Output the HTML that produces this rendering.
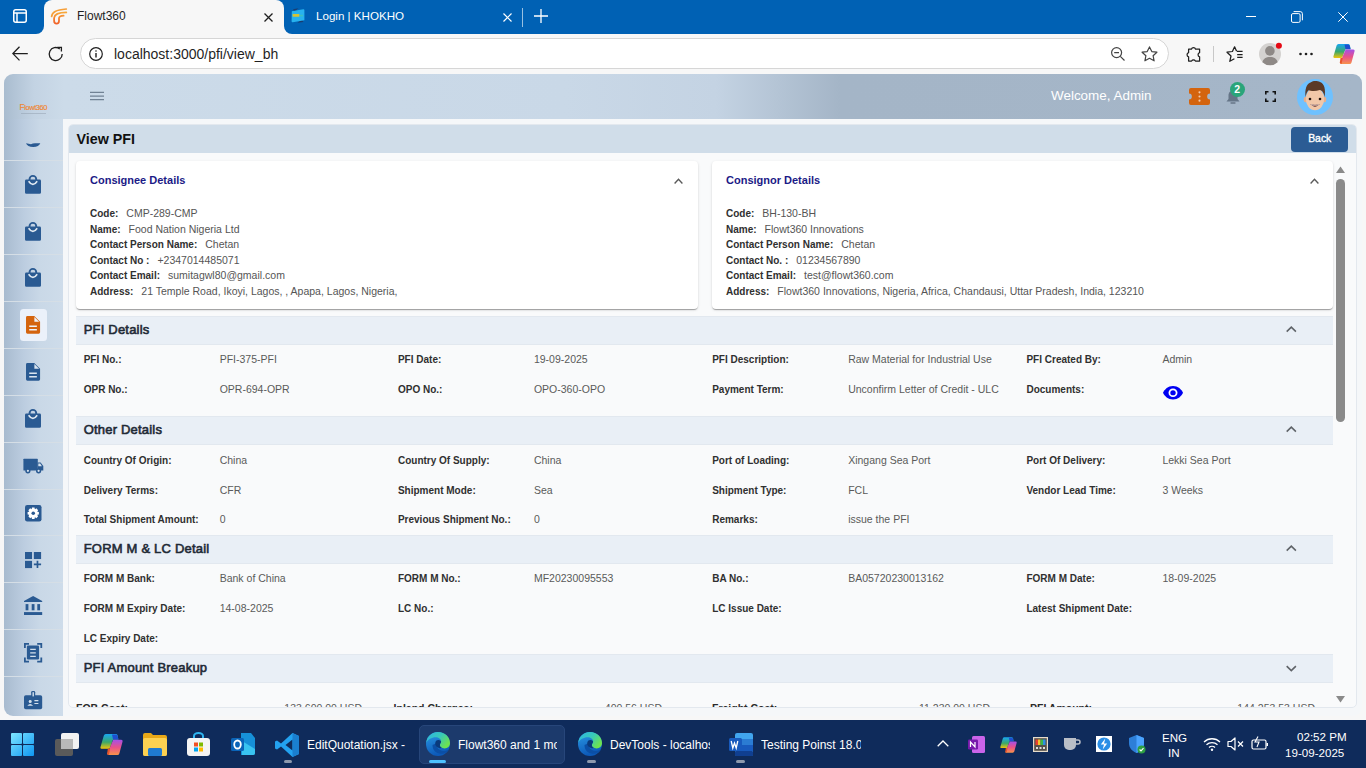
<!DOCTYPE html><html><head><meta charset="utf-8"><style>
*{margin:0;padding:0;box-sizing:border-box}
html,body{width:1366px;height:768px;overflow:hidden;background:#f7f7f7;font-family:"Liberation Sans",sans-serif}
.t{position:absolute;white-space:nowrap}
.abs{position:absolute}
svg{position:absolute;overflow:visible}
</style></head><body><div class="abs" style="left:0;top:0;width:1366px;height:34px;background:#0061b4"></div>
<div class="abs" style="left:36px;top:26px;width:8px;height:8px;background:#f7f7f7"></div>
<div class="abs" style="left:28px;top:18px;width:16px;height:16px;background:#0061b4;border-radius:0 0 8px 0"></div>
<div class="abs" style="left:284px;top:26px;width:8px;height:8px;background:#f7f7f7"></div>
<div class="abs" style="left:284px;top:18px;width:16px;height:16px;background:#0061b4;border-radius:0 0 0 8px"></div>
<div class="abs" style="left:44px;top:0;width:240px;height:34px;background:#f7f7f7;border-radius:8px 8px 0 0"></div>
<svg style="left:13px;top:9px" width="14" height="14" viewBox="0 0 14 14"><rect x="0.75" y="0.75" width="12.5" height="12.5" rx="2" fill="none" stroke="#fff" stroke-width="1.5"/><line x1="0.75" y1="4" x2="13" y2="4" stroke="#fff" stroke-width="1.5"/><line x1="4" y1="4" x2="4" y2="13" stroke="#fff" stroke-width="1.5"/></svg>
<svg style="left:46px;top:4px" width="26" height="24" viewBox="0 0 26 24"><defs><linearGradient id="fv" x1="0" y1="0" x2="0" y2="1"><stop offset="0" stop-color="#f7a83a"/><stop offset="1" stop-color="#f0622a"/></linearGradient></defs><path d="M5.6 12.5C6.3 8.2 9.5 6 20.3 5" fill="none" stroke="#f6a03a" stroke-width="1.7" stroke-linecap="round"/><path d="M20.3 8.4C12.5 8.4 8.6 9.6 8.1 14V16.7Q8.1 19.6 10.6 19.6Q13 19.6 13 16.7V14.2Q13.2 11.9 17.6 11.7" fill="none" stroke="url(#fv)" stroke-width="1.8" stroke-linecap="round"/></svg>
<div class="t" style="left:77px;top:10.34px;font-size:12px;line-height:12px;font-weight:400;color:#1f1f1f;">Flowt360</div>
<svg style="left:264px;top:13px" width="9" height="9" viewBox="0 0 9 9"><path d="M0.5 0.5L8.5 8.5M8.5 0.5L0.5 8.5" stroke="#1f1f1f" stroke-width="1.3"/></svg>
<svg style="left:291px;top:8px" width="14" height="15" viewBox="0 0 14 15"><path d="M2 1.2L7.5 0.3L3.5 3.5Z" fill="#1b3d70"/><path d="M12.5 14L6.5 14.8L10.5 11.5Z" fill="#1b3d70"/><path d="M0.8 3.2L12.2 1.2Q13.4 1 13.4 2.2V12.3L1.8 14.2Q0.6 14.4 0.6 13.2Z" fill="#27b2ee"/><rect x="1.6" y="6" width="6.8" height="2.8" rx="0.6" fill="#d6c232"/><rect x="8.6" y="6.8" width="3.5" height="1.6" fill="#4cc8a0" opacity="0.6"/></svg>
<div class="t" style="left:316px;top:9.78px;font-size:11.6px;line-height:11.6px;font-weight:400;color:#ffffff;">Login | KHOKHO</div>
<svg style="left:503px;top:13px" width="9" height="9" viewBox="0 0 9 9"><path d="M0.5 0.5L8.5 8.5M8.5 0.5L0.5 8.5" stroke="#fff" stroke-width="1.2"/></svg>
<div class="abs" style="left:522px;top:8px;width:1px;height:19px;background:rgba(255,255,255,0.6)"></div>
<svg style="left:534px;top:9px" width="14" height="14" viewBox="0 0 14 14"><path d="M7 0V14M0 7H14" stroke="#fff" stroke-width="1.3"/></svg>
<div class="abs" style="left:1246px;top:16px;width:10px;height:1px;background:#fff"></div>
<svg style="left:1291px;top:11px" width="12" height="12" viewBox="0 0 12 12"><rect x="0.5" y="2.6" width="8.6" height="8.8" rx="1.4" fill="none" stroke="#fff" stroke-width="1"/><path d="M2.6 0.6H9.2A2.2 2.2 0 0 1 11.4 2.8V9.3" fill="none" stroke="#fff" stroke-width="1"/></svg>
<svg style="left:1338px;top:12px" width="10" height="10" viewBox="0 0 10 10"><path d="M0.3 0.3L9.7 9.7M9.7 0.3L0.3 9.7" stroke="#fff" stroke-width="1"/></svg>
<div class="abs" style="left:0;top:34px;width:1366px;height:39px;background:#f7f7f7"></div>
<svg style="left:12px;top:46px" width="16" height="16" viewBox="0 0 16 16"><path d="M7.5 0.8L0.9 7.6L7.5 14.4M0.9 7.6H15.8" fill="none" stroke="#1f1f1f" stroke-width="1.3"/></svg>
<svg style="left:48px;top:46px" width="16" height="16" viewBox="0 0 16 16"><path d="M14.2 8A6.5 6.5 0 1 1 11.8 3" fill="none" stroke="#1f1f1f" stroke-width="1.3"/><path d="M9.2 1.3H13.4V5.5" fill="none" stroke="#1f1f1f" stroke-width="1.3"/></svg>
<div class="abs" style="left:80px;top:38px;width:1089px;height:31px;background:#fff;border:1px solid #d6d6d6;border-radius:16px"></div>
<svg style="left:89px;top:47px" width="14" height="14" viewBox="0 0 14 14"><circle cx="7" cy="7" r="6.3" fill="none" stroke="#1f1f1f" stroke-width="1.2"/><path d="M7 6V10.5" stroke="#1f1f1f" stroke-width="1.4"/><circle cx="7" cy="4" r="0.8" fill="#1f1f1f"/></svg>
<div class="t" style="left:114px;top:47.15px;font-size:14px;line-height:14px;font-weight:400;color:#1f1f1f;">localhost:3000/pfi/view_bh</div>
<svg style="left:1111px;top:47px" width="14" height="14" viewBox="0 0 14 14"><circle cx="5.6" cy="5.6" r="5" fill="none" stroke="#444" stroke-width="1.2"/><path d="M3.2 5.6H8M9.3 9.3L13.5 13.5" stroke="#444" stroke-width="1.2"/></svg>
<svg style="left:1141px;top:46px" width="17" height="16" viewBox="0 0 17 16"><path d="M8.5 0.9L10.8 5.6L15.9 6.2L12.1 9.7L13.1 14.8L8.5 12.3L3.9 14.8L4.9 9.7L1.1 6.2L6.2 5.6Z" fill="none" stroke="#444" stroke-width="1.2" stroke-linejoin="round"/></svg>
<svg style="left:1186px;top:46px" width="15" height="16" viewBox="0 0 15 16"><path d="M2.6 3.2H5.4A2.2 2.2 0 0 1 9.6 3.2H13.6V6.6A2.2 2.2 0 0 0 13.6 10.8V15H9.4A2.2 2.2 0 0 0 5.6 15H2.6V10.8A2.2 2.2 0 0 1 2.6 6.6Z" fill="none" stroke="#1f1f1f" stroke-width="1.25" stroke-linejoin="round"/></svg>
<div class="abs" style="left:1213px;top:46px;width:1px;height:16px;background:#c8c8c8"></div>
<svg style="left:1225.5px;top:46px" width="17" height="16" viewBox="0 0 17 16"><path d="M10.6 5.2L8.6 0.8L6.4 5.5L1 6.2L5 10L3.8 15.3L8.4 12.8" fill="none" stroke="#1f1f1f" stroke-width="1.25" stroke-linejoin="round"/><path d="M11 5.4H16.6M11.2 8.5H16.6M11.2 11.3H16.6" stroke="#1f1f1f" stroke-width="1.25"/></svg>
<svg style="left:1259px;top:43px" width="24" height="24" viewBox="0 0 24 24"><circle cx="11" cy="11" r="11" fill="#d4d2d0"/><circle cx="10.9" cy="7.9" r="4.8" fill="#8e8986"/><path d="M3.4 19.2C4 15.8 7 13.9 11 13.9C15 13.9 18 15.8 18.6 19.2A11 11 0 0 1 3.4 19.2Z" fill="#8e8986"/><circle cx="19.9" cy="2.8" r="3" fill="#e50914"/></svg>
<svg style="left:1299px;top:52px" width="14" height="4" viewBox="0 0 14 4"><circle cx="1.5" cy="2" r="1.3" fill="#1f1f1f"/><circle cx="7" cy="2" r="1.3" fill="#1f1f1f"/><circle cx="12.5" cy="2" r="1.3" fill="#1f1f1f"/></svg>
<svg style="left:1333px;top:44px" width="22" height="20" viewBox="0 0 22 20"><defs><linearGradient id="cpa" x1="0" y1="0" x2="0" y2="1"><stop offset="0" stop-color="#19a7f2"/><stop offset="0.55" stop-color="#3aa86a"/><stop offset="1" stop-color="#f2c40a"/></linearGradient><linearGradient id="cpb" x1="0" y1="0" x2="0" y2="1"><stop offset="0" stop-color="#a450e8"/><stop offset="0.5" stop-color="#e9518a"/><stop offset="1" stop-color="#f7934a"/></linearGradient></defs><path d="M5.5 0H15Q16.4 0 16.9 1.4L17.6 5.2H12.5L9.6 12.8Q9.1 14 7.8 14H1.4Q0 14 0.4 12.6L3.6 1.6Q4.1 0 5.5 0Z" fill="url(#cpa)"/><path d="M11.5 0.5H15Q16.4 0.5 16.9 1.9L17.6 5.2H12.5Z" fill="#1d4fd0"/><path d="M12.6 5.5H20.3Q22 5.5 21.6 7.1L18.5 18.5Q18.1 20 16.5 20H8Q6.7 20 7.1 18.6L9.2 13.5Z" fill="url(#cpb)"/><path d="M7.5 14H9.7L8.5 20Q7 20 6.8 18.6Z" fill="#e8542a"/></svg>
<div class="abs" style="left:0;top:720px;width:1366px;height:48px;background:#0f2b5b"></div>
<svg style="left:11px;top:733px" width="23" height="23" viewBox="0 0 23 23"><defs><linearGradient id="wl" gradientUnits="userSpaceOnUse" x1="0" y1="0" x2="23" y2="23"><stop offset="0" stop-color="#7ee6ff"/><stop offset="1" stop-color="#0e96f2"/></linearGradient></defs><rect x="0" y="0" width="11" height="11" rx="1" fill="url(#wl)"/><rect x="12" y="0" width="11" height="11" rx="1" fill="url(#wl)"/><rect x="0" y="12" width="11" height="11" rx="1" fill="url(#wl)"/><rect x="12" y="12" width="11" height="11" rx="1" fill="url(#wl)"/></svg>
<svg style="left:55px;top:733px" width="24" height="23" viewBox="0 0 24 23"><rect x="0" y="6" width="18" height="17" rx="2" fill="#5a5a5a"/><rect x="6" y="0" width="18" height="16" rx="2" fill="#f2f2f2"/><rect x="6" y="6" width="12" height="10" fill="#b8b8b8"/></svg>
<svg style="left:100px;top:734px" width="23" height="21" viewBox="0 0 22 20"><path d="M5.5 0H15Q16.4 0 16.9 1.4L17.6 5.2H12.5L9.6 12.8Q9.1 14 7.8 14H1.4Q0 14 0.4 12.6L3.6 1.6Q4.1 0 5.5 0Z" fill="url(#cpa)"/><path d="M11.5 0.5H15Q16.4 0.5 16.9 1.9L17.6 5.2H12.5Z" fill="#1d4fd0"/><path d="M12.6 5.5H20.3Q22 5.5 21.6 7.1L18.5 18.5Q18.1 20 16.5 20H8Q6.7 20 7.1 18.6L9.2 13.5Z" fill="url(#cpb)"/><path d="M7.5 14H9.7L8.5 20Q7 20 6.8 18.6Z" fill="#e8542a"/></svg>
<svg style="left:143px;top:733px" width="24" height="23" viewBox="0 0 24 23"><path d="M0 2A2 2 0 0 1 2 0H8L10 2H22A2 2 0 0 1 24 4V21A2 2 0 0 1 22 23H2A2 2 0 0 1 0 21Z" fill="#e8a818"/><rect x="0" y="5" width="24" height="18" rx="2" fill="#fcd152"/><rect x="5" y="15" width="14" height="8" rx="1.5" fill="#1f7ad1"/></svg>
<svg style="left:187px;top:733px" width="23" height="23" viewBox="0 0 23 23"><path d="M7 5V3A4.5 3 0 0 1 16 3V5" fill="none" stroke="#2fb5f0" stroke-width="2"/><rect x="0" y="5" width="23" height="18" rx="3" fill="#f4f4f4"/><rect x="7" y="9.5" width="4" height="4" fill="#f25022"/><rect x="12" y="9.5" width="4" height="4" fill="#7fba00"/><rect x="7" y="14.5" width="4" height="4" fill="#00a4ef"/><rect x="12" y="14.5" width="4" height="4" fill="#ffb900"/></svg>
<svg style="left:231px;top:733px" width="24" height="23" viewBox="0 0 24 23"><path d="M10 0H20L24 5V20A2 2 0 0 1 22 22H10Z" fill="#1690d8"/><path d="M11 8L24 16V20A2 2 0 0 1 22 22H11Z" fill="#39c3f0"/><rect x="0" y="5" width="13" height="13" rx="1.5" fill="#0a64b8"/><ellipse cx="6.5" cy="11.5" rx="3.3" ry="4" fill="none" stroke="#fff" stroke-width="1.8"/></svg>
<svg style="left:275px;top:733px" width="24" height="24" viewBox="0 0 24 24"><path d="M17.5 0L24 3V21L17.5 24L6 13.5L2 16.5L0 15.5V8.5L2 7.5L6 10.5L17.5 0ZM17.5 6.5L10.5 12L17.5 17.5Z" fill="#23a2f0"/><path d="M17.5 0L24 3V21L17.5 24Z" fill="#1a7fd0"/></svg>
<div class="abs" style="left:284px;top:760px;width:8px;height:3px;border-radius:2px;background:#8d99ae"></div>
<div class="t" style="left:307px;top:738.84px;font-size:12px;line-height:12px;font-weight:400;color:#ffffff;">EditQuotation.jsx -</div>
<div class="abs" style="left:418.5px;top:724.5px;width:146px;height:39px;border-radius:5px;background:#1c3a6c;border:1px solid #27467a"></div>
<svg style="left:426px;top:732px" width="24" height="24" viewBox="0 0 24 24"><defs><linearGradient id="eb1" x1="0" y1="0" x2="0.3" y2="1"><stop offset="0" stop-color="#2c9be6"/><stop offset="1" stop-color="#0c59b8"/></linearGradient><linearGradient id="eg1" x1="0" y1="0" x2="1" y2="0.6"><stop offset="0" stop-color="#2eb4e6"/><stop offset="0.55" stop-color="#38c9b8"/><stop offset="1" stop-color="#6ee34e"/></linearGradient></defs><circle cx="12" cy="12" r="12" fill="url(#eb1)"/><path d="M6.5 13C6.5 18 10 21.5 15 21.8C18.5 22 21.5 20 23 17.5C21 19 17 19.5 14 18C11 16.5 10 13.5 11 11Z" fill="#0b4fa6"/><path d="M0.2 10.8C0.9 4.3 6 0 12 0C19 0 24 5 24 11C24 14.5 21.6 16.4 18.6 16.4C15.9 16.4 13.9 15.1 13.9 13.3C13.9 11.6 15.1 11.1 15.1 9.6C15.1 7.1 12.6 5.3 9.6 5.3C5.6 5.3 2 7.6 0.2 10.8Z" fill="url(#eg1)"/><path d="M9.2 11.5C9.2 9.2 10.8 8 12.5 8.1C14.3 8.3 15.1 9.4 15.1 9.6C15.1 11.1 13.9 11.6 13.9 13.3C13.9 14.6 14.8 15.6 16 16.1C12.5 16.8 9.2 14.5 9.2 11.5Z" fill="#0a3a7c"/></svg>
<div class="abs" style="left:429px;top:760px;width:17px;height:3px;border-radius:2px;background:#4cc2ff"></div>
<div class="abs" style="left:458px;top:735px;width:99px;height:20px;overflow:hidden"><div class="t" style="left:0px;top:3.84px;font-size:12px;line-height:12px;font-weight:400;color:#ffffff;">Flowt360 and 1 more tab</div></div>
<svg style="left:578px;top:732px" width="24" height="24" viewBox="0 0 24 24"><defs><linearGradient id="eb2" x1="0" y1="0" x2="0.3" y2="1"><stop offset="0" stop-color="#2c9be6"/><stop offset="1" stop-color="#0c59b8"/></linearGradient><linearGradient id="eg2" x1="0" y1="0" x2="1" y2="0.6"><stop offset="0" stop-color="#2eb4e6"/><stop offset="0.55" stop-color="#38c9b8"/><stop offset="1" stop-color="#6ee34e"/></linearGradient></defs><circle cx="12" cy="12" r="12" fill="url(#eb2)"/><path d="M6.5 13C6.5 18 10 21.5 15 21.8C18.5 22 21.5 20 23 17.5C21 19 17 19.5 14 18C11 16.5 10 13.5 11 11Z" fill="#0b4fa6"/><path d="M0.2 10.8C0.9 4.3 6 0 12 0C19 0 24 5 24 11C24 14.5 21.6 16.4 18.6 16.4C15.9 16.4 13.9 15.1 13.9 13.3C13.9 11.6 15.1 11.1 15.1 9.6C15.1 7.1 12.6 5.3 9.6 5.3C5.6 5.3 2 7.6 0.2 10.8Z" fill="url(#eg2)"/><path d="M9.2 11.5C9.2 9.2 10.8 8 12.5 8.1C14.3 8.3 15.1 9.4 15.1 9.6C15.1 11.1 13.9 11.6 13.9 13.3C13.9 14.6 14.8 15.6 16 16.1C12.5 16.8 9.2 14.5 9.2 11.5Z" fill="#0a3a7c"/></svg>
<div class="abs" style="left:587px;top:760px;width:9px;height:3px;border-radius:2px;background:#8d99ae"></div>
<div class="abs" style="left:610px;top:735px;width:100px;height:20px;overflow:hidden"><div class="t" style="left:0px;top:3.84px;font-size:12px;line-height:12px;font-weight:400;color:#ffffff;">DevTools - localhost</div></div>
<svg style="left:729px;top:733px" width="24" height="23" viewBox="0 0 24 23"><rect x="6" y="0" width="18" height="23" rx="2" fill="#41a5ee"/><rect x="6" y="6" width="18" height="6" fill="#2b7cd3"/><rect x="6" y="12" width="18" height="6" fill="#185abd"/><rect x="6" y="18" width="18" height="5" rx="1" fill="#103f91"/><rect x="0" y="5" width="13" height="13" rx="1.5" fill="#185abd"/><path d="M2.2 8L3.8 15L5.5 10L7.2 15L8.8 8" fill="none" stroke="#fff" stroke-width="1.3"/></svg>
<div class="abs" style="left:736px;top:760px;width:9px;height:3px;border-radius:2px;background:#8d99ae"></div>
<div class="abs" style="left:761px;top:735px;width:100px;height:20px;overflow:hidden"><div class="t" style="left:0px;top:3.84px;font-size:12px;line-height:12px;font-weight:400;color:#ffffff;">Testing Poinst 18.09</div></div>
<svg style="left:937px;top:740px" width="12" height="7" viewBox="0 0 12 7"><path d="M0.7 6.3L6 1L11.3 6.3" fill="none" stroke="#fff" stroke-width="1.3"/></svg>
<svg style="left:968px;top:736px" width="17" height="17" viewBox="0 0 17 17"><rect x="4" y="0" width="13" height="17" rx="1.5" fill="#ca64ea"/><rect x="0" y="3.5" width="10" height="10" rx="1.2" fill="#7719aa"/><path d="M2.5 11V6L7 11V6" fill="none" stroke="#fff" stroke-width="1.2"/></svg>
<svg style="left:1000px;top:737px" width="17" height="16" viewBox="0 0 22 20"><path d="M5.5 0H15Q16.4 0 16.9 1.4L17.6 5.2H12.5L9.6 12.8Q9.1 14 7.8 14H1.4Q0 14 0.4 12.6L3.6 1.6Q4.1 0 5.5 0Z" fill="url(#cpa)"/><path d="M11.5 0.5H15Q16.4 0.5 16.9 1.9L17.6 5.2H12.5Z" fill="#1d4fd0"/><path d="M12.6 5.5H20.3Q22 5.5 21.6 7.1L18.5 18.5Q18.1 20 16.5 20H8Q6.7 20 7.1 18.6L9.2 13.5Z" fill="url(#cpb)"/><path d="M7.5 14H9.7L8.5 20Q7 20 6.8 18.6Z" fill="#e8542a"/></svg>
<svg style="left:1033px;top:737px" width="15" height="15" viewBox="0 0 15 15"><rect x="0" y="0" width="15" height="15" fill="#e6dccb"/><rect x="1.2" y="1.2" width="12.6" height="12.6" fill="#55504a"/><rect x="2.5" y="2.5" width="2.5" height="5.5" fill="#e8402f"/><rect x="5" y="2.5" width="2.5" height="5.5" fill="#f2c12e"/><rect x="7.5" y="2.5" width="2.5" height="5.5" fill="#3ab54a"/><rect x="10" y="2.5" width="2.5" height="5.5" fill="#2f8fe0"/><rect x="3" y="10" width="2" height="2" fill="#ddd"/><rect x="6.5" y="10" width="2" height="2" fill="#ddd"/><rect x="10" y="10" width="2" height="2" fill="#ddd"/></svg>
<svg style="left:1063px;top:737px" width="17" height="14" viewBox="0 0 17 14"><path d="M1 1H13V8A5 5 0 0 1 8 13H6A5 5 0 0 1 1 8Z" fill="#b9bec6"/><path d="M13 3H15A1.5 1.5 0 0 1 15 7H13" fill="none" stroke="#b9bec6" stroke-width="1.5"/></svg>
<svg style="left:1096px;top:736px" width="16" height="16" viewBox="0 0 16 16"><rect x="0" y="0" width="16" height="16" fill="#ffffff"/><circle cx="8" cy="8" r="6.6" fill="#2a8ee6"/><path d="M9.3 2.6L4.8 8.6H8L6.7 13.4L11.2 7.4H8Z" fill="#fff"/></svg>
<svg style="left:1129px;top:735px" width="17" height="19" viewBox="0 0 17 19"><path d="M7.5 0L15 3V8C15 13 12 16 7.5 18C3 16 0 13 0 8V3Z" fill="#2d7fd8"/><path d="M7.5 0L15 3V8C15 13 12 16 7.5 18Z" fill="#4aa3ff"/><circle cx="12.5" cy="14.5" r="4" fill="#2ea043"/><path d="M10.6 14.5L12 15.9L14.5 13.2" fill="none" stroke="#fff" stroke-width="1.1"/></svg>
<div class="t" style="left:1162px;top:732.18px;font-size:11.6px;line-height:11.6px;font-weight:400;color:#ffffff;">ENG</div>
<div class="t" style="left:1168px;top:747.18px;font-size:11.6px;line-height:11.6px;font-weight:400;color:#ffffff;">IN</div>
<svg style="left:1203px;top:737px" width="18" height="14" viewBox="0 0 18 14"><path d="M1 5A11.5 11.5 0 0 1 17 5M3.5 7.8A8 8 0 0 1 14.5 7.8M6 10.5A4.3 4.3 0 0 1 12 10.5" fill="none" stroke="#fff" stroke-width="1.3"/><circle cx="9" cy="12.8" r="1.2" fill="#fff"/></svg>
<svg style="left:1227px;top:737px" width="17" height="14" viewBox="0 0 17 14"><path d="M1 4.5H4L8 1V13L4 9.5H1Z" fill="none" stroke="#fff" stroke-width="1.2" stroke-linejoin="round"/><path d="M11 4.5L16 9.5M16 4.5L11 9.5" stroke="#fff" stroke-width="1.2"/></svg>
<svg style="left:1251px;top:736px" width="18" height="16" viewBox="0 0 18 16"><rect x="1" y="4" width="14" height="9" rx="1.5" fill="none" stroke="#fff" stroke-width="1.2"/><rect x="15.5" y="7" width="1.5" height="3" fill="#fff"/><path d="M7 0.5L4 6H8L6 11" fill="none" stroke="#fff" stroke-width="1.1"/></svg>
<div class="t" style="left:1297px;top:731.18px;font-size:11.6px;line-height:11.6px;font-weight:400;color:#ffffff;">02:52 PM</div>
<div class="t" style="left:1285px;top:747.18px;font-size:11.6px;line-height:11.6px;font-weight:400;color:#ffffff;">19-09-2025</div>
<div class="abs" style="left:0;top:0;width:1366px;height:768px;clip-path:inset(74px 4px 52px 4px round 9px)">
<div class="abs" style="left:4px;top:74px;width:1358px;height:642px;background:#f5f7f9"></div>
<div class="abs" style="left:4px;top:74px;width:1358px;height:45px;background:linear-gradient(90deg,#a9bccf 0px,#c3d3e3 30px,#ccdbe9 60px,#c9d8e7 560px,#c4d3e3 712px,#a4b5c7 836px,#a5b6c8 1358px)"></div>
<div class="abs" style="left:4px;top:119px;width:59px;height:597px;background:linear-gradient(90deg,#a8bbcf 0px,#bccde0 20px,#c9d8e7 36px,#cedcea 59px)"></div>
<div class="t" style="left:19.5px;top:103px;font-size:8.5px;line-height:9px;color:#ef8530;letter-spacing:-0.45px;font-weight:400;-webkit-text-stroke:0.15px #ef8530">F<span style="font-size:7.5px">lowt360</span></div>
<div class="abs" style="left:21px;top:112.5px;width:25px;height:1px;background:#8c98a8;opacity:0.45"></div>
<svg style="left:90px;top:91px" width="14" height="10" viewBox="0 0 14 10"><path d="M0 1.3H14M0 5H14M0 8.7H14" stroke="#718294" stroke-width="1.25"/></svg>
<div class="t" style="left:1051px;top:89.41px;font-size:13.45px;line-height:13.45px;font-weight:400;color:#ffffff;">Welcome, Admin</div>
<svg style="left:1189px;top:88px" width="21" height="17" viewBox="0 0 22 17" preserveAspectRatio="none"><path d="M2 0H20A2 2 0 0 1 22 2V5.5A3 3 0 0 0 22 11.5V15A2 2 0 0 1 20 17H2A2 2 0 0 1 0 15V11.5A3 3 0 0 0 0 5.5V2A2 2 0 0 1 2 0Z" fill="#d4640e"/><circle cx="11" cy="4.3" r="1.1" fill="#f3c9a8"/><circle cx="11" cy="8.5" r="1.1" fill="#f3c9a8"/><circle cx="11" cy="12.7" r="1.1" fill="#f3c9a8"/></svg>
<svg style="left:1226px;top:89px" width="14" height="16" viewBox="0 0 14 16"><path d="M7 1.5C4 1.5 2.5 4 2.5 6.5V10L0.5 12.5H13.5L11.5 10V6.5C11.5 4 10 1.5 7 1.5Z" fill="#657587"/><path d="M5 14H9" stroke="#657587" stroke-width="1.3" stroke-linecap="round"/></svg>
<div class="abs" style="left:1230px;top:81.5px;width:15px;height:15px;border-radius:50%;background:#2aa57a"></div>
<div class="t" style="left:1234.2px;top:84.11px;font-size:10.5px;line-height:10.5px;font-weight:700;color:#ffffff;">2</div>
<svg style="left:1264.5px;top:90.5px" width="11" height="11" viewBox="0 0 11 11"><path d="M0.8 3.5V0.8H3.5M7.5 0.8H10.2V3.5M10.2 7.5V10.2H7.5M3.5 10.2H0.8V7.5" fill="none" stroke="#111" stroke-width="1.6"/></svg>
<svg style="left:1297px;top:79px" width="36" height="36" viewBox="0 0 36 36"><circle cx="18" cy="18" r="18" fill="#6ec1ff"/><ellipse cx="8.6" cy="20.5" rx="1.9" ry="2.8" fill="#e6ae8c"/><ellipse cx="27.4" cy="20.5" rx="1.9" ry="2.8" fill="#e6ae8c"/><ellipse cx="18" cy="20" rx="9.2" ry="11.2" fill="#f1c7a8"/><path d="M8.6 18C7.6 10.5 9.5 4.5 14 3.2C16 1.6 20.5 1.8 23 3C27.5 4.8 28.8 10.5 27.6 18C26.8 13.5 25.2 11.6 22.8 11C19 12.3 14 12.2 11.6 11.2C10 12.8 9.1 15 8.6 18Z" fill="#5b3a27"/><circle cx="13" cy="20" r="1.3" fill="#231510"/><circle cx="23" cy="20" r="1.3" fill="#231510"/><path d="M13.2 25Q18 30.5 22.8 25Q18 26.3 13.2 25Z" fill="#5a1f18"/><path d="M14 25.3Q18 26.3 22 25.3L21.6 26.2Q18 27 14.4 26.2Z" fill="#fff"/></svg>
<div class="abs" style="left:4px;top:160px;width:59px;height:1px;background:#d5dee6"></div>
<div class="abs" style="left:4px;top:207px;width:59px;height:1px;background:#d5dee6"></div>
<div class="abs" style="left:4px;top:254px;width:59px;height:1px;background:#d5dee6"></div>
<div class="abs" style="left:4px;top:301px;width:59px;height:1px;background:#d5dee6"></div>
<div class="abs" style="left:4px;top:348px;width:59px;height:1px;background:#d5dee6"></div>
<div class="abs" style="left:4px;top:395px;width:59px;height:1px;background:#d5dee6"></div>
<div class="abs" style="left:4px;top:442px;width:59px;height:1px;background:#d5dee6"></div>
<div class="abs" style="left:4px;top:489px;width:59px;height:1px;background:#d5dee6"></div>
<div class="abs" style="left:4px;top:535px;width:59px;height:1px;background:#d5dee6"></div>
<div class="abs" style="left:4px;top:582px;width:59px;height:1px;background:#d5dee6"></div>
<div class="abs" style="left:4px;top:629px;width:59px;height:1px;background:#d5dee6"></div>
<div class="abs" style="left:4px;top:676px;width:59px;height:1px;background:#d5dee6"></div>
<svg style="left:25.7px;top:142.9px" width="14.3" height="4" viewBox="0 0 14.3 4"><path d="M0 0.3Q3 0.6 5 1.2Q6.5 0.4 9 0.2L14.3 0.3Q13 4 7.2 4Q1.3 4 0 0.3Z" fill="#2a5a92"/></svg>
<svg style="left:25px;top:174px" width="16" height="20" viewBox="0 0 16 20"><circle cx="7.9" cy="5.3" r="3.4" fill="none" stroke="#2a5a92" stroke-width="1.9"/><path d="M1.4 5.6H14.6A1.4 1.4 0 0 1 16 7V18.4A1.4 1.4 0 0 1 14.6 19.8H1.4A1.4 1.4 0 0 1 0 18.4V7A1.4 1.4 0 0 1 1.4 5.6Z" fill="#2a5a92"/><path d="M3.6 7.2Q7.9 13.6 12.2 7.2" fill="none" stroke="#dfe8f1" stroke-width="1.6"/></svg>
<svg style="left:25px;top:220.5px" width="16" height="20" viewBox="0 0 16 20"><circle cx="7.9" cy="5.3" r="3.4" fill="none" stroke="#2a5a92" stroke-width="1.9"/><path d="M1.4 5.6H14.6A1.4 1.4 0 0 1 16 7V18.4A1.4 1.4 0 0 1 14.6 19.8H1.4A1.4 1.4 0 0 1 0 18.4V7A1.4 1.4 0 0 1 1.4 5.6Z" fill="#2a5a92"/><path d="M3.6 7.2Q7.9 13.6 12.2 7.2" fill="none" stroke="#dfe8f1" stroke-width="1.6"/></svg>
<svg style="left:25px;top:267px" width="16" height="20" viewBox="0 0 16 20"><circle cx="7.9" cy="5.3" r="3.4" fill="none" stroke="#2a5a92" stroke-width="1.9"/><path d="M1.4 5.6H14.6A1.4 1.4 0 0 1 16 7V18.4A1.4 1.4 0 0 1 14.6 19.8H1.4A1.4 1.4 0 0 1 0 18.4V7A1.4 1.4 0 0 1 1.4 5.6Z" fill="#2a5a92"/><path d="M3.6 7.2Q7.9 13.6 12.2 7.2" fill="none" stroke="#dfe8f1" stroke-width="1.6"/></svg>
<div class="abs" style="left:20px;top:309px;width:26.6px;height:31.8px;border-radius:3.5px;background:#ebf1fa"></div>
<svg style="left:25.8px;top:315.9px" width="14.1" height="17.7" viewBox="0 0 14 17.6"><path d="M1.4 0H8.2L14 5.8V16.2A1.4 1.4 0 0 1 12.6 17.6H1.4A1.4 1.4 0 0 1 0 16.2V1.4A1.4 1.4 0 0 1 1.4 0Z" fill="#d4640e"/><path d="M8.3 0.9V5.7H13.1Z" fill="#eef3fa"/><path d="M3.2 10.1H10.8M3.2 13.6H10.8" stroke="#eef3fa" stroke-width="1.5"/></svg>
<svg style="left:25.8px;top:363.0px" width="14.1" height="17.7" viewBox="0 0 14 17.6"><path d="M1.4 0H8.2L14 5.8V16.2A1.4 1.4 0 0 1 12.6 17.6H1.4A1.4 1.4 0 0 1 0 16.2V1.4A1.4 1.4 0 0 1 1.4 0Z" fill="#2a5a92"/><path d="M8.3 0.9V5.7H13.1Z" fill="#dbe5ef"/><path d="M3.2 10.1H10.8M3.2 13.6H10.8" stroke="#dbe5ef" stroke-width="1.5"/></svg>
<svg style="left:25px;top:408px" width="16" height="20" viewBox="0 0 16 20"><circle cx="7.9" cy="5.3" r="3.4" fill="none" stroke="#2a5a92" stroke-width="1.9"/><path d="M1.4 5.6H14.6A1.4 1.4 0 0 1 16 7V18.4A1.4 1.4 0 0 1 14.6 19.8H1.4A1.4 1.4 0 0 1 0 18.4V7A1.4 1.4 0 0 1 1.4 5.6Z" fill="#2a5a92"/><path d="M3.6 7.2Q7.9 13.6 12.2 7.2" fill="none" stroke="#dfe8f1" stroke-width="1.6"/></svg>
<svg style="left:22.5px;top:457.5px" width="21" height="16" viewBox="0 0 21 16"><rect x="0.4" y="0.7" width="14.4" height="11.8" rx="0.6" fill="#2a5a92"/><path d="M14.6 4.4H17.6L20.3 7.9V12.5H14.6Z" fill="#2a5a92"/><path d="M15.3 5.4H17.2L18.9 8.3H15.3Z" fill="#d6e2ee"/><circle cx="4.9" cy="12.8" r="2.6" fill="#2a5a92"/><circle cx="4.9" cy="12.8" r="1.1" fill="#d6e2ee"/><circle cx="15.6" cy="12.8" r="2.6" fill="#2a5a92"/><circle cx="15.6" cy="12.8" r="1.1" fill="#d6e2ee"/></svg>
<svg style="left:24.5px;top:504.5px" width="16.5" height="16.5" viewBox="0 0 16 16"><rect width="16" height="16" rx="2.2" fill="#2a5a92"/><path d="M12.02 6.49 L13.47 6.78 L13.47 9.22 L12.02 9.51 L11.92 9.77 L12.73 11.00 L11.00 12.73 L9.77 11.92 L9.51 12.02 L9.22 13.47 L6.78 13.47 L6.49 12.02 L6.23 11.92 L5.00 12.73 L3.27 11.00 L4.08 9.77 L3.98 9.51 L2.53 9.22 L2.53 6.78 L3.98 6.49 L4.08 6.23 L3.27 5.00 L5.00 3.27 L6.23 4.08 L6.49 3.98 L6.78 2.53 L9.22 2.53 L9.51 3.98 L9.77 4.08 L11.00 3.27 L12.73 5.00 L11.92 6.23Z" fill="#fff"/><circle cx="8" cy="8" r="1.7" fill="#2a5a92"/></svg>
<svg style="left:24.8px;top:551.8px" width="16.1" height="16.1" viewBox="0 0 16 16"><rect x="0" y="0" width="7" height="7" fill="#2a5a92"/><rect x="8.8" y="0" width="7.2" height="7" fill="#2a5a92"/><rect x="0" y="8.8" width="7" height="7.2" fill="#2a5a92"/><path d="M12.4 8.8V16M8.8 12.4H16" stroke="#2a5a92" stroke-width="1.7"/></svg>
<svg style="left:23.8px;top:595.8px" width="18.2" height="19" viewBox="0 0 18.2 19"><path d="M9.1 0L18.2 5V6H0V5Z" fill="#2a5a92"/><rect x="1.6" y="8.1" width="2.8" height="6.2" fill="#2a5a92"/><rect x="7.7" y="8.1" width="2.8" height="6.2" fill="#2a5a92"/><rect x="13.3" y="8.1" width="2.8" height="6.2" fill="#2a5a92"/><rect x="0" y="16.1" width="18.2" height="2.9" fill="#2a5a92"/></svg>
<svg style="left:23.8px;top:643.1px" width="18.2" height="19.5" viewBox="0 0 18.2 19.5"><path d="M0.9 5V0.9H5M13.2 0.9H17.3V5M17.3 14.5V18.6H13.2M5 18.6H0.9V14.5" fill="none" stroke="#2a5a92" stroke-width="1.8"/><rect x="2.9" y="2.5" width="12.2" height="14.1" rx="1.3" fill="#2a5a92"/><path d="M6.2 6.4H11.8M6.2 9.9H11.8M6.2 13.4H11.8" stroke="#d3dfeb" stroke-width="1.3"/></svg>
<svg style="left:23.8px;top:690.7px" width="18.2" height="18.3" viewBox="0 0 18.2 18.3"><rect x="0" y="4.2" width="18.2" height="14.1" rx="1.8" fill="#2a5a92"/><rect x="7.2" y="0" width="4" height="6.6" rx="1.3" fill="#2a5a92"/><rect x="8.5" y="1.2" width="1.4" height="4.2" fill="#d6e2ee"/><circle cx="6.2" cy="10.4" r="1.5" fill="#d6e2ee"/><path d="M3.3 14.7Q6.2 11.5 9.1 14.7Z" fill="#d6e2ee"/><path d="M10.4 9.7H14.4M10.4 12.5H14.4" stroke="#d6e2ee" stroke-width="1.2"/></svg>
<div class="abs" style="left:68px;top:124px;width:1289px;height:584px;border:1px solid #e3e8ee;border-radius:5px;background:#f9fafb"></div>
<div class="abs" style="left:69px;top:125px;width:1287px;height:28px;background:#d0dde9;border-radius:4px 4px 0 0"></div>
<div class="t" style="left:76.5px;top:131.60px;font-size:14.3px;line-height:14.3px;font-weight:700;color:#111111;">View PFI</div>
<div class="abs" style="left:1291px;top:127px;width:57px;height:25px;background:#2b5c94;border-radius:4px"></div>
<div class="t" style="left:1308.2px;top:134.20px;font-size:10.4px;line-height:10.4px;font-weight:400;color:#ffffff;-webkit-text-stroke:0.35px #ffffff">Back</div>
<div class="abs" style="left:0;top:0;width:1366px;height:768px;clip-path:inset(155px 10px 61px 69px)"><div class="abs" style="left:76px;top:161px;width:622px;height:148px;background:#fff;border-radius:4px;box-shadow:0 2px 1px -1px rgba(0,0,0,.2),0 1px 1px 0 rgba(0,0,0,.14),0 1px 3px 0 rgba(0,0,0,.12)"></div><div class="t" style="left:90px;top:175.29px;font-size:11px;line-height:11px;font-weight:700;color:#1b1a86;">Consignee Details</div><svg style="left:673.6px;top:178px" width="9" height="6" viewBox="0 0 9 6"><path d="M0.6 5.4L4.5 1.3L8.4 5.4" fill="none" stroke="#5a5a5a" stroke-width="1.4"/></svg><div class="t" style="left:90px;top:208.11px;font-size:10.5px;line-height:10.5px;color:#555"><b style="font-size:10px;color:#303030;margin-right:8px">Code:</b>CMP-289-CMP</div><div class="t" style="left:90px;top:224.11px;font-size:10.5px;line-height:10.5px;color:#555"><b style="font-size:10px;color:#303030;margin-right:8px">Name:</b>Food Nation Nigeria Ltd</div><div class="t" style="left:90px;top:239.11px;font-size:10.5px;line-height:10.5px;color:#555"><b style="font-size:10px;color:#303030;margin-right:8px">Contact Person Name:</b>Chetan</div><div class="t" style="left:90px;top:255.11px;font-size:10.5px;line-height:10.5px;color:#555"><b style="font-size:10px;color:#303030;margin-right:8px">Contact No :</b>+2347014485071</div><div class="t" style="left:90px;top:270.11px;font-size:10.5px;line-height:10.5px;color:#555"><b style="font-size:10px;color:#303030;margin-right:8px">Contact Email:</b>sumitagwl80@gmail.com</div><div class="t" style="left:90px;top:286.11px;font-size:10.5px;line-height:10.5px;color:#555"><b style="font-size:10px;color:#303030;margin-right:8px">Address:</b>21 Temple Road, Ikoyi, Lagos, , Apapa, Lagos, Nigeria,</div><div class="abs" style="left:712px;top:161px;width:621px;height:148px;background:#fff;border-radius:4px;box-shadow:0 2px 1px -1px rgba(0,0,0,.2),0 1px 1px 0 rgba(0,0,0,.14),0 1px 3px 0 rgba(0,0,0,.12)"></div><div class="t" style="left:726px;top:175.29px;font-size:11px;line-height:11px;font-weight:700;color:#1b1a86;">Consignor Details</div><svg style="left:1309.6px;top:178px" width="9" height="6" viewBox="0 0 9 6"><path d="M0.6 5.4L4.5 1.3L8.4 5.4" fill="none" stroke="#5a5a5a" stroke-width="1.4"/></svg><div class="t" style="left:726px;top:208.11px;font-size:10.5px;line-height:10.5px;color:#555"><b style="font-size:10px;color:#303030;margin-right:8px">Code:</b>BH-130-BH</div><div class="t" style="left:726px;top:224.11px;font-size:10.5px;line-height:10.5px;color:#555"><b style="font-size:10px;color:#303030;margin-right:8px">Name:</b>Flowt360 Innovations</div><div class="t" style="left:726px;top:239.11px;font-size:10.5px;line-height:10.5px;color:#555"><b style="font-size:10px;color:#303030;margin-right:8px">Contact Person Name:</b>Chetan</div><div class="t" style="left:726px;top:255.11px;font-size:10.5px;line-height:10.5px;color:#555"><b style="font-size:10px;color:#303030;margin-right:8px">Contact No. :</b>01234567890</div><div class="t" style="left:726px;top:270.11px;font-size:10.5px;line-height:10.5px;color:#555"><b style="font-size:10px;color:#303030;margin-right:8px">Contact Email:</b>test@flowt360.com</div><div class="t" style="left:726px;top:286.11px;font-size:10.5px;line-height:10.5px;color:#555"><b style="font-size:10px;color:#303030;margin-right:8px">Address:</b>Flowt360 Innovations, Nigeria, Africa, Chandausi, Uttar Pradesh, India, 123210</div><div class="abs" style="left:76px;top:316px;width:1257px;height:29px;background:#e9eff6;border-top:1px solid #e2e8ef;border-bottom:1px solid #e2e8ef"></div><div class="t" style="left:83.7px;top:323.20px;font-size:13px;line-height:13px;font-weight:400;color:#1f2a36;-webkit-text-stroke:0.6px #1f2a36;letter-spacing:0.2px">PFI Details</div><svg style="left:1285.8px;top:325.8px" width="11" height="7" viewBox="0 0 11 7"><path d="M0.7 5.6L5.3 1.2L9.9 5.6" fill="none" stroke="#5f6368" stroke-width="1.6"/></svg><div class="t" style="left:83.7px;top:354.41px;font-size:10.5px;line-height:10.5px;color:#5a5a5a"><span style="display:inline-block;width:136px;font-size:10px;font-weight:700;color:#303030">PFI No.:</span>PFI-375-PFI</div><div class="t" style="left:397.95px;top:354.41px;font-size:10.5px;line-height:10.5px;color:#5a5a5a"><span style="display:inline-block;width:136px;font-size:10px;font-weight:700;color:#303030">PFI Date:</span>19-09-2025</div><div class="t" style="left:712.2px;top:354.41px;font-size:10.5px;line-height:10.5px;color:#5a5a5a"><span style="display:inline-block;width:136px;font-size:10px;font-weight:700;color:#303030">PFI Description:</span>Raw Material for Industrial Use</div><div class="t" style="left:1026.45px;top:354.41px;font-size:10.5px;line-height:10.5px;color:#5a5a5a"><span style="display:inline-block;width:136px;font-size:10px;font-weight:700;color:#303030">PFI Created By:</span>Admin</div><div class="t" style="left:83.7px;top:384.31px;font-size:10.5px;line-height:10.5px;color:#5a5a5a"><span style="display:inline-block;width:136px;font-size:10px;font-weight:700;color:#303030">OPR No.:</span>OPR-694-OPR</div><div class="t" style="left:397.95px;top:384.31px;font-size:10.5px;line-height:10.5px;color:#5a5a5a"><span style="display:inline-block;width:136px;font-size:10px;font-weight:700;color:#303030">OPO No.:</span>OPO-360-OPO</div><div class="t" style="left:712.2px;top:384.31px;font-size:10.5px;line-height:10.5px;color:#5a5a5a"><span style="display:inline-block;width:136px;font-size:10px;font-weight:700;color:#303030">Payment Term:</span>Unconfirm Letter of Credit - ULC</div><div class="t" style="left:1026.45px;top:384.31px;font-size:10.5px;line-height:10.5px;color:#5a5a5a"><span style="display:inline-block;width:136px;font-size:10px;font-weight:700;color:#303030">Documents:</span></div><svg style="left:1162.8px;top:385.9px" width="20" height="13.5" viewBox="0 0 20 14" preserveAspectRatio="none"><path d="M10 0C5 0 1.5 3.5 0 7C1.5 10.5 5 14 10 14S18.5 10.5 20 7C18.5 3.5 15 0 10 0Z" fill="#0000f2"/><circle cx="10" cy="7" r="4.5" fill="#fff"/><circle cx="10" cy="7" r="2.7" fill="#0000f2"/></svg><div class="abs" style="left:76px;top:416px;width:1257px;height:29px;background:#e9eff6;border-top:1px solid #e2e8ef;border-bottom:1px solid #e2e8ef"></div><div class="t" style="left:83.7px;top:423.20px;font-size:13px;line-height:13px;font-weight:400;color:#1f2a36;-webkit-text-stroke:0.6px #1f2a36;letter-spacing:0.2px">Other Details</div><svg style="left:1285.8px;top:425.8px" width="11" height="7" viewBox="0 0 11 7"><path d="M0.7 5.6L5.3 1.2L9.9 5.6" fill="none" stroke="#5f6368" stroke-width="1.6"/></svg><div class="t" style="left:83.7px;top:455.31px;font-size:10.5px;line-height:10.5px;color:#5a5a5a"><span style="display:inline-block;width:136px;font-size:10px;font-weight:700;color:#303030">Country Of Origin:</span>China</div><div class="t" style="left:397.95px;top:455.31px;font-size:10.5px;line-height:10.5px;color:#5a5a5a"><span style="display:inline-block;width:136px;font-size:10px;font-weight:700;color:#303030">Country Of Supply:</span>China</div><div class="t" style="left:712.2px;top:455.31px;font-size:10.5px;line-height:10.5px;color:#5a5a5a"><span style="display:inline-block;width:136px;font-size:10px;font-weight:700;color:#303030">Port of Loading:</span>Xingang Sea Port</div><div class="t" style="left:1026.45px;top:455.31px;font-size:10.5px;line-height:10.5px;color:#5a5a5a"><span style="display:inline-block;width:136px;font-size:10px;font-weight:700;color:#303030">Port Of Delivery:</span>Lekki Sea Port</div><div class="t" style="left:83.7px;top:485.01px;font-size:10.5px;line-height:10.5px;color:#5a5a5a"><span style="display:inline-block;width:136px;font-size:10px;font-weight:700;color:#303030">Delivery Terms:</span>CFR</div><div class="t" style="left:397.95px;top:485.01px;font-size:10.5px;line-height:10.5px;color:#5a5a5a"><span style="display:inline-block;width:136px;font-size:10px;font-weight:700;color:#303030">Shipment Mode:</span>Sea</div><div class="t" style="left:712.2px;top:485.01px;font-size:10.5px;line-height:10.5px;color:#5a5a5a"><span style="display:inline-block;width:136px;font-size:10px;font-weight:700;color:#303030">Shipment Type:</span>FCL</div><div class="t" style="left:1026.45px;top:485.01px;font-size:10.5px;line-height:10.5px;color:#5a5a5a"><span style="display:inline-block;width:136px;font-size:10px;font-weight:700;color:#303030">Vendor Lead Time:</span>3 Weeks</div><div class="t" style="left:83.7px;top:513.91px;font-size:10.5px;line-height:10.5px;color:#5a5a5a"><span style="display:inline-block;width:136px;font-size:10px;font-weight:700;color:#303030">Total Shipment Amount:</span>0</div><div class="t" style="left:397.95px;top:513.91px;font-size:10.5px;line-height:10.5px;color:#5a5a5a"><span style="display:inline-block;width:136px;font-size:10px;font-weight:700;color:#303030">Previous Shipment No.:</span>0</div><div class="t" style="left:712.2px;top:513.91px;font-size:10.5px;line-height:10.5px;color:#5a5a5a"><span style="display:inline-block;width:136px;font-size:10px;font-weight:700;color:#303030">Remarks:</span>issue the PFI</div><div class="abs" style="left:76px;top:535px;width:1257px;height:29px;background:#e9eff6;border-top:1px solid #e2e8ef;border-bottom:1px solid #e2e8ef"></div><div class="t" style="left:83.7px;top:542.20px;font-size:13px;line-height:13px;font-weight:400;color:#1f2a36;-webkit-text-stroke:0.6px #1f2a36;letter-spacing:0.2px">FORM M &amp; LC Detail</div><svg style="left:1285.8px;top:544.8px" width="11" height="7" viewBox="0 0 11 7"><path d="M0.7 5.6L5.3 1.2L9.9 5.6" fill="none" stroke="#5f6368" stroke-width="1.6"/></svg><div class="t" style="left:83.7px;top:573.01px;font-size:10.5px;line-height:10.5px;color:#5a5a5a"><span style="display:inline-block;width:136px;font-size:10px;font-weight:700;color:#303030">FORM M Bank:</span>Bank of China</div><div class="t" style="left:397.95px;top:573.01px;font-size:10.5px;line-height:10.5px;color:#5a5a5a"><span style="display:inline-block;width:136px;font-size:10px;font-weight:700;color:#303030">FORM M No.:</span>MF20230095553</div><div class="t" style="left:712.2px;top:573.01px;font-size:10.5px;line-height:10.5px;color:#5a5a5a"><span style="display:inline-block;width:136px;font-size:10px;font-weight:700;color:#303030">BA No.:</span>BA05720230013162</div><div class="t" style="left:1026.45px;top:573.01px;font-size:10.5px;line-height:10.5px;color:#5a5a5a"><span style="display:inline-block;width:136px;font-size:10px;font-weight:700;color:#303030">FORM M Date:</span>18-09-2025</div><div class="t" style="left:83.7px;top:602.91px;font-size:10.5px;line-height:10.5px;color:#5a5a5a"><span style="display:inline-block;width:136px;font-size:10px;font-weight:700;color:#303030">FORM M Expiry Date:</span>14-08-2025</div><div class="t" style="left:397.95px;top:602.91px;font-size:10.5px;line-height:10.5px;color:#5a5a5a"><span style="display:inline-block;width:136px;font-size:10px;font-weight:700;color:#303030">LC No.:</span></div><div class="t" style="left:712.2px;top:602.91px;font-size:10.5px;line-height:10.5px;color:#5a5a5a"><span style="display:inline-block;width:136px;font-size:10px;font-weight:700;color:#303030">LC Issue Date:</span></div><div class="t" style="left:1026.45px;top:602.91px;font-size:10.5px;line-height:10.5px;color:#5a5a5a"><span style="display:inline-block;width:136px;font-size:10px;font-weight:700;color:#303030">Latest Shipment Date:</span></div><div class="t" style="left:83.7px;top:632.91px;font-size:10.5px;line-height:10.5px;color:#5a5a5a"><span style="display:inline-block;width:136px;font-size:10px;font-weight:700;color:#303030">LC Expiry Date:</span></div><div class="abs" style="left:76px;top:654px;width:1257px;height:29px;background:#e9eff6;border-top:1px solid #e2e8ef;border-bottom:1px solid #e2e8ef"></div><div class="t" style="left:83.7px;top:661.20px;font-size:13px;line-height:13px;font-weight:400;color:#1f2a36;-webkit-text-stroke:0.6px #1f2a36;letter-spacing:0.2px">PFI Amount Breakup</div><svg style="left:1285.8px;top:665.3px" width="11" height="7" viewBox="0 0 11 7"><path d="M0.7 1.2L5.3 5.6L9.9 1.2" fill="none" stroke="#5f6368" stroke-width="1.6"/></svg><div class="t" style="left:76px;top:703.11px;font-size:10.5px;line-height:10.5px;font-weight:700;color:#2b2b2b;">FOB Cost:</div><div class="t" style="right:1004px;top:703.11px;font-size:10.5px;line-height:10.5px;color:#5a5a5a">133,600.00 USD</div><div class="t" style="left:393.6px;top:703.11px;font-size:10.5px;line-height:10.5px;font-weight:700;color:#2b2b2b;">Inland Charges:</div><div class="t" style="right:704px;top:703.11px;font-size:10.5px;line-height:10.5px;color:#5a5a5a">400.56 USD</div><div class="t" style="left:712px;top:703.11px;font-size:10.5px;line-height:10.5px;font-weight:700;color:#2b2b2b;">Freight Cost:</div><div class="t" style="right:376px;top:703.11px;font-size:10.5px;line-height:10.5px;color:#5a5a5a">11,230.00 USD</div><div class="t" style="left:1030px;top:703.11px;font-size:10.5px;line-height:10.5px;font-weight:700;color:#2b2b2b;">PFI Amount:</div><div class="t" style="right:51px;top:703.11px;font-size:10.5px;line-height:10.5px;color:#5a5a5a">144,253.53 USD</div></div>
<svg style="left:1336px;top:166px" width="9" height="7" viewBox="0 0 9 7"><path d="M4.5 0.5L9 7H0Z" fill="#8a8a8a"/></svg>
<div class="abs" style="left:1336px;top:179px;width:9px;height:243px;border-radius:4.5px;background:#8a8a8a"></div>
<svg style="left:1336px;top:696px" width="9" height="7" viewBox="0 0 9 7"><path d="M0 0H9L4.5 6.5Z" fill="#8a8a8a"/></svg>
</div></body></html>
